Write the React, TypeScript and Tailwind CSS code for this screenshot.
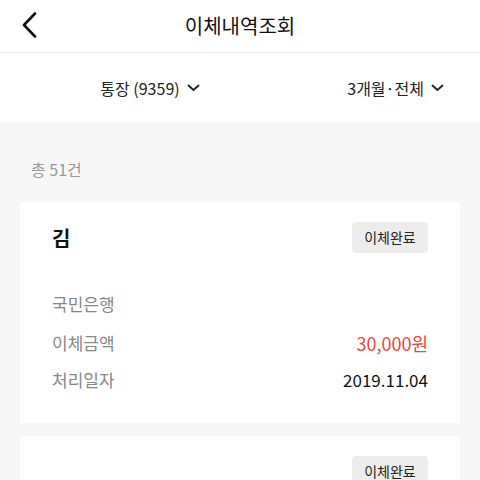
import React from "react";

function Chevron() {
  return (
    <svg width="13" height="8" viewBox="0 0 13 8" fill="none" className="ml-[7px]">
      <path d="M1.5 1.5 L6.5 6 L11.5 1.5" stroke="#222" strokeWidth="1.8" strokeLinecap="round" strokeLinejoin="round" />
    </svg>
  );
}

type Transfer = { name: string; bank: string; amount: string; date: string };

function TransferCard({ t }: { t?: Transfer }) {
  return (
    <div className="bg-white px-[32px] pt-[20px] pb-[30px]">
      <div className="flex h-[31px] items-center justify-between">
        <span className="text-[20px] font-bold leading-[28px] text-[#111]">{t?.name}</span>
        <span className="flex h-[31px] w-[76px] items-center justify-center rounded-[4px] bg-[#ececec] text-[14px] text-[#222]">
          이체완료
        </span>
      </div>
      {t && (
        <>
          <div className="mt-[38px] text-[17px] leading-[26px] text-[#888]">{t.bank}</div>
          <div className="mt-[13px] flex justify-between text-[17px] leading-[26px]">
            <span className="text-[#888]">이체금액</span>
            <span className="text-[18px] text-[#e8493e]">{t.amount}</span>
          </div>
          <div className="mt-[11px] flex justify-between text-[17px] leading-[26px]">
            <span className="text-[#888]">처리일자</span>
            <span className="text-[#111]">{t.date}</span>
          </div>
        </>
      )}
    </div>
  );
}

export default function App() {
  return (
    <div className="h-[480px] w-[480px] overflow-hidden bg-[#f7f7f7]" style={{ fontFamily: '"Noto Sans CJK KR", "Noto Sans", sans-serif' }}>
      {/* Header */}
      <header className="relative flex h-[53px] items-center justify-center border-b border-[#ececec] bg-white">
        <button className="absolute left-[20px] top-[12px]">
          <svg width="20" height="26" viewBox="0 0 20 26" fill="none">
            <path d="M15 1.5 L4 13 L15 24.5" stroke="#111" strokeWidth="2.6" strokeLinecap="round" strokeLinejoin="round" />
          </svg>
        </button>
        <h1 className="text-[20px] text-[#111]">이체내역조회</h1>
      </header>

      {/* Filters */}
      <div className="grid h-[69px] grid-cols-2 items-center bg-white">
        <div className="flex items-center justify-center pl-[60px] text-[16px] text-[#222]">
          통장 (9359)
          <Chevron />
        </div>
        <div className="flex items-center justify-end pr-[36px] text-[16px] text-[#222]">
          3개월·전체
          <Chevron />
        </div>
      </div>

      {/* List */}
      <div className="px-[20px]">
        <div className="pt-[35px] pb-[21px] pl-[11px] text-[16px] text-[#999]">총 51건</div>
        <div className="flex flex-col gap-[13px]">
          <TransferCard t={{ name: "김", bank: "국민은행", amount: "30,000원", date: "2019.11.04" }} />
          <TransferCard />
        </div>
      </div>
    </div>
  );
}
